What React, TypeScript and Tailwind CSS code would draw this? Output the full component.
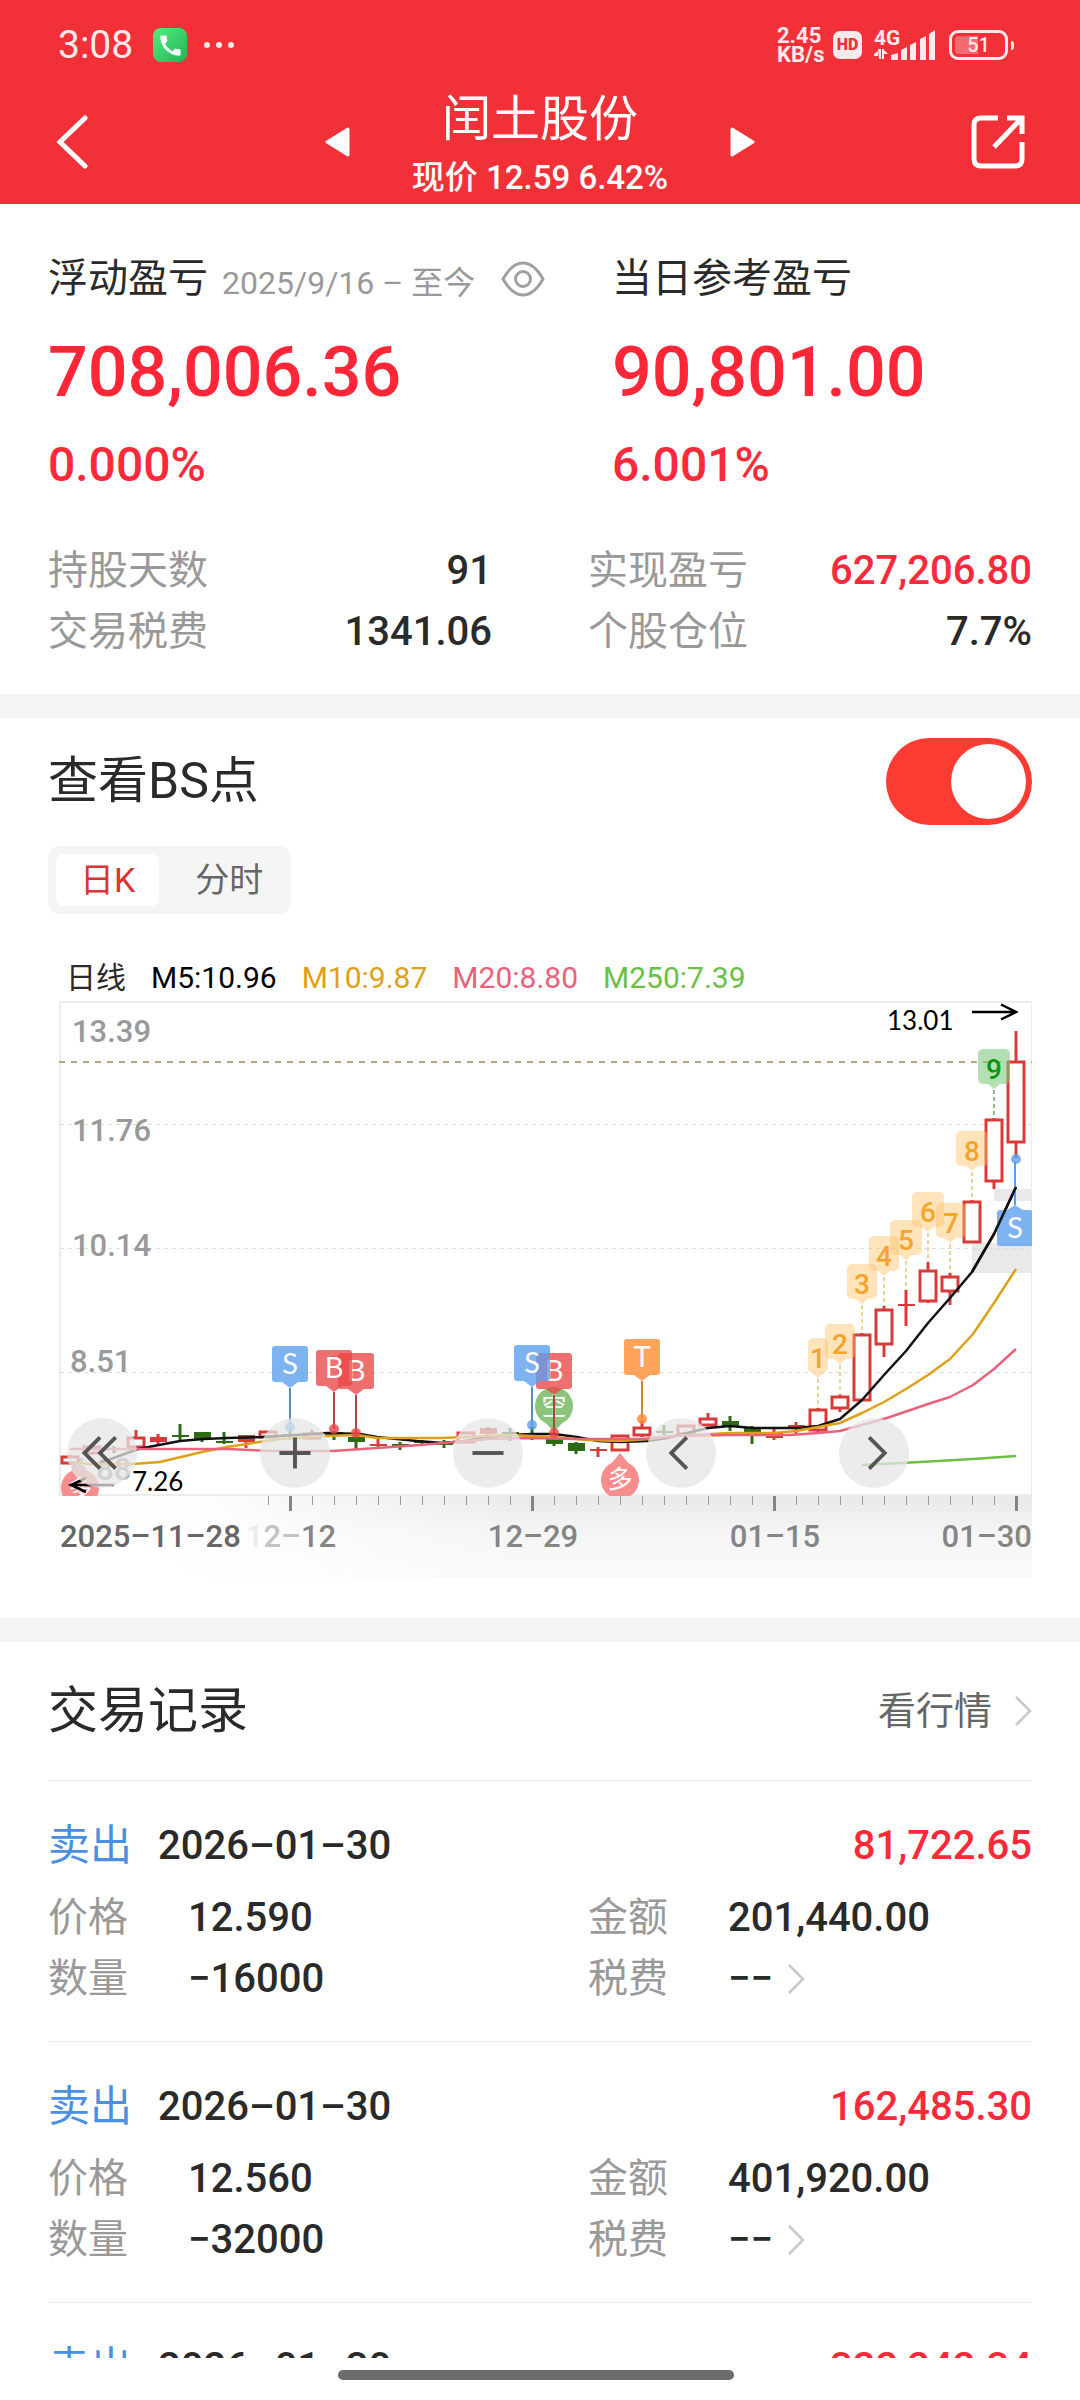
import { useState } from "react";
import { MdCall } from "react-icons/md";

type Candle = { k: "r" | "g"; top: number; bottom: number; high: number; low: number; fill?: boolean };

const X0 = 70;
const STEP = 22;

const candles: Candle[] = [
  { k: "r", top: 1457, bottom: 1463, high: 1455, low: 1465 },
  { k: "r", top: 1447, bottom: 1453, high: 1446, low: 1455 },
  { k: "g", top: 1448, bottom: 1450, high: 1446, low: 1453 },
  { k: "r", top: 1438, bottom: 1447, high: 1430, low: 1447 },
  { k: "r", top: 1437, bottom: 1442, high: 1434, low: 1444, fill: true },
  { k: "g", top: 1435, bottom: 1437, high: 1424, low: 1440 },
  { k: "g", top: 1432, bottom: 1440, high: 1432, low: 1442 },
  { k: "g", top: 1441, bottom: 1443, high: 1432, low: 1444 },
  { k: "r", top: 1435, bottom: 1442, high: 1435, low: 1448, fill: true },
  { k: "r", top: 1432, bottom: 1437, high: 1431, low: 1437 },
  { k: "g", top: 1434, bottom: 1436, high: 1428, low: 1440 },
  { k: "r", top: 1434, bottom: 1438, high: 1430, low: 1438 },
  { k: "g", top: 1432, bottom: 1435, high: 1431, low: 1440 },
  { k: "g", top: 1437, bottom: 1442, high: 1436, low: 1449 },
  { k: "r", top: 1444, bottom: 1446, high: 1438, low: 1447 },
  { k: "g", top: 1444, bottom: 1446, high: 1442, low: 1450 },
  { k: "g", top: 1441, bottom: 1443, high: 1440, low: 1444 },
  { k: "g", top: 1443, bottom: 1445, high: 1440, low: 1448 },
  { k: "r", top: 1433, bottom: 1442, high: 1432, low: 1443 },
  { k: "r", top: 1428, bottom: 1434, high: 1427, low: 1438, fill: true },
  { k: "g", top: 1432, bottom: 1434, high: 1428, low: 1441 },
  { k: "g", top: 1433, bottom: 1438, high: 1426, low: 1440 },
  { k: "g", top: 1439, bottom: 1444, high: 1438, low: 1446 },
  { k: "g", top: 1443, bottom: 1451, high: 1442, low: 1454 },
  { k: "r", top: 1449, bottom: 1451, high: 1447, low: 1457 },
  { k: "r", top: 1436, bottom: 1450, high: 1435, low: 1450 },
  { k: "r", top: 1428, bottom: 1435, high: 1420, low: 1437 },
  { k: "g", top: 1431, bottom: 1433, high: 1425, low: 1435 },
  { k: "r", top: 1426, bottom: 1434, high: 1425, low: 1434 },
  { k: "r", top: 1419, bottom: 1425, high: 1413, low: 1426 },
  { k: "g", top: 1421, bottom: 1426, high: 1416, low: 1431 },
  { k: "g", top: 1427, bottom: 1433, high: 1426, low: 1444 },
  { k: "r", top: 1433, bottom: 1438, high: 1428, low: 1440, fill: true },
  { k: "r", top: 1425, bottom: 1427, high: 1422, low: 1434 },
  { k: "r", top: 1410, bottom: 1430, high: 1408, low: 1432 },
  { k: "r", top: 1397, bottom: 1408, high: 1394, low: 1412 },
  { k: "r", top: 1335, bottom: 1400, high: 1333, low: 1401 },
  { k: "r", top: 1310, bottom: 1344, high: 1306, low: 1357 },
  { k: "r", top: 1304, bottom: 1306, high: 1290, low: 1326 },
  { k: "r", top: 1271, bottom: 1301, high: 1262, low: 1303 },
  { k: "r", top: 1277, bottom: 1291, high: 1273, low: 1305 },
  { k: "r", top: 1202, bottom: 1242, high: 1200, low: 1243 },
  { k: "r", top: 1120, bottom: 1181, high: 1118, low: 1189 },
  { k: "r", top: 1062, bottom: 1142, high: 1031, low: 1158 },
];

const M5 =
  "100,1463 138,1449 180,1441 203,1439 227,1438 263,1437 327,1433 360,1434 377,1437 417,1441 443,1443 465,1441 488,1437 510,1435 532,1434 554,1434 577,1437 598,1441 620,1442 647,1441 667,1438 687,1433 708,1428 730,1426 753,1428 797,1428 818,1426 840,1419 862,1400 884,1375 906,1351 928,1323 950,1298 972,1272 994,1234 1016,1187";
const M10 =
  "70,1462 90,1464 133,1464 160,1462 202,1452 227,1447 253,1443 280,1439 327,1436 357,1435 377,1438 440,1438 467,1437 510,1435 554,1437 587,1440 620,1441 650,1439 673,1436 730,1433 774,1433 796,1431 818,1427 840,1423 862,1413 884,1402 906,1389 928,1375 950,1359 973,1334 994,1303 1016,1269";
const M20 =
  "70,1449 227,1449 273,1451 333,1451 377,1448 420,1445 443,1443 467,1441 488,1439 530,1438 577,1439 643,1439 673,1436 730,1435 790,1435 818,1433 840,1431 862,1425 887,1418 928,1404 950,1397 973,1385 994,1369 1016,1349";
const M250 = "862,1465 920,1462 973,1459 1016,1456";

type Flag = { i: number; y: number; dot: number; t: string; bg: string; line: string };
const flags: Flag[] = [
  { i: 10, y: 1346, dot: 1427, t: "S", bg: "#5a9eee", line: "#4f8fc4" },
  { i: 13, y: 1353, dot: 1433, t: "B", bg: "#ea4648", line: "#b04444" },
  { i: 12, y: 1350, dot: 1429, t: "B", bg: "#ea4648", line: "#b04444" },
  { i: 22, y: 1353, dot: 1433, t: "B", bg: "#ea4648", line: "#b04444" },
  { i: 21, y: 1345, dot: 1425, t: "S", bg: "#5a9eee", line: "#4f8fc4" },
  { i: 26, y: 1339, dot: 1419, t: "T", bg: "#ff8a2d", line: "#cc8833" },
];

type Tag = { n: string; x: number; y: number; w: number; end: number };
const tags: Tag[] = [
  { n: "1", x: 818, y: 1338, w: 20, end: 1408 },
  { n: "2", x: 840, y: 1324, w: 30, end: 1395 },
  { n: "3", x: 862, y: 1264, w: 30, end: 1333 },
  { n: "4", x: 884, y: 1236, w: 30, end: 1306 },
  { n: "5", x: 906, y: 1220, w: 32, end: 1290 },
  { n: "6", x: 928, y: 1192, w: 32, end: 1262 },
  { n: "7", x: 951, y: 1203, w: 30, end: 1273 },
  { n: "8", x: 972, y: 1131, w: 32, end: 1200 },
  { n: "9", x: 994, y: 1049, w: 32, end: 1118 },
];

function CandleShape({ c, i }: { c: Candle; i: number }) {
  const x = X0 + i * STEP;
  const color = c.k === "r" ? "#d83a3a" : "#2f6b14";
  const solid = c.fill || c.k === "g" || c.bottom - c.top <= 2;
  return (
    <g>
      <line x1={x} x2={x} y1={c.high} y2={c.top} stroke={color} strokeWidth={3} />
      <line x1={x} x2={x} y1={c.bottom} y2={c.low} stroke={color} strokeWidth={3} />
      {solid ? (
        <rect x={x - 8} y={c.top} width={17} height={c.bottom - c.top} fill={color} />
      ) : (
        <rect x={x - 8} y={c.top} width={16} height={c.bottom - c.top} fill="#fff" stroke={color} strokeWidth={3} />
      )}
    </g>
  );
}

function Chart() {
  const ticks = Array.from({ length: 35 }, (_, n) => n + 9);
  return (
    <svg viewBox="0 0 984 580" className="block h-auto w-full" role="img" aria-label="日K线图">
      <defs>
        <linearGradient id="strip" x1="0" y1="0" x2="0" y2="1">
          <stop offset="0" stopColor="#e9e9e9" />
          <stop offset="0.45" stopColor="#f5f5f5" />
          <stop offset="1" stopColor="#fafafa" />
        </linearGradient>
        <linearGradient id="fade" x1="0" y1="0" x2="1" y2="0">
          <stop offset="0" stopColor="#fff" />
          <stop offset="0.3" stopColor="#fff" stopOpacity="0.9" />
          <stop offset="1" stopColor="#fff" stopOpacity="0" />
        </linearGradient>
        <clipPath id="plot">
          <rect x="59" y="1000" width="975" height="496" />
        </clipPath>
      </defs>
      <g transform="translate(-48 -1000)" fontFamily='Roboto, "Noto Sans CJK SC", sans-serif'>
        <rect x="972" y="1243" width="61" height="30" fill="#e9e9e9" />
        <rect x="994" y="1189" width="39" height="12" fill="#e9e9e9" />
        <g stroke="#dddddd" strokeWidth="1" strokeDasharray="4 4">
          <line x1="60" x2="1033" y1="1124.5" y2="1124.5" />
          <line x1="60" x2="1033" y1="1248.5" y2="1248.5" />
          <line x1="60" x2="1033" y1="1372.5" y2="1372.5" />
        </g>
        <rect x="60" y="1002" width="972" height="493" fill="none" stroke="#ececec" strokeWidth="2" />
        <line x1="59" x2="1033" y1="1062" y2="1062" stroke="#b5a980" strokeWidth="2" strokeDasharray="6 6" />

        <rect x="59" y="1496" width="974" height="82" fill="url(#strip)" />
        <rect x="59" y="1496" width="480" height="82" fill="url(#fade)" />

        <g fill="#999999" fontSize="31" fontWeight="500">
          <text x="72" y="1042">13.39</text>
          <text x="72" y="1141">11.76</text>
          <text x="72" y="1256">10.14</text>
          <text x="70" y="1372">8.51</text>
          <text x="70" y="1480">6.88</text>
        </g>

        <g clipPath="url(#plot)">
          <g>
            <circle cx="80" cy="1488" r="19" fill="#f78d8d" />
            <path d="M73 1472l7-8 7 8z" fill="#f78d8d" />
            <text x="80" y="1497" textAnchor="middle" fontSize="24" fill="#fff">多</text>
            <circle cx="620" cy="1480" r="19" fill="#f78d8d" />
            <path d="M611 1464l9-11 9 11z" fill="#f78d8d" />
            <text x="620" y="1488" textAnchor="middle" fontSize="25" fill="#fff">多</text>
            <circle cx="554" cy="1406" r="19" fill="#8cc47c" />
            <path d="M544 1421l10 11 10-11z" fill="#8cc47c" />
            <text x="554" y="1415" textAnchor="middle" fontSize="25" fill="#fff">空</text>
          </g>
          {candles.map((c, i) => (
            <CandleShape key={i} c={c} i={i} />
          ))}
          <g fill="none" strokeWidth="2.5" strokeLinejoin="round">
            <polyline points={M5} stroke="#111111" />
            <polyline points={M10} stroke="#dfa018" />
            <polyline points={M20} stroke="#e8637a" />
            <polyline points={M250} stroke="#6bbf45" />
          </g>
        </g>

        {tags.map((t) => {
          const green = t.n === "9";
          const c = t.n === "7" ? 950 : t.x;
          return (
            <g key={t.n}>
              <line x1={c} x2={c} y1={t.y + 41} y2={t.end} stroke={green ? "#8bbf8b" : "#ecd596"} strokeWidth="2" strokeDasharray="4 3" />
              <g fill={green ? "#7cc87c" : "#ffc169"} fillOpacity={green ? 0.58 : 0.45}>
                <rect x={t.x - t.w / 2} y={t.y} width={t.w} height="35" rx="5" />
                <path d={`M${c - 6} ${t.y + 35}l6 5 6-5z`} />
              </g>
              <text x={t.x} y={t.y + 30} textAnchor="middle" fontSize="28" fontWeight="500" fill={green ? "#0a960a" : "#f5a32a"}>
                {t.n}
              </text>
            </g>
          );
        })}

        {flags.map((f) => {
          const x = X0 + f.i * STEP;
          return (
            <g key={f.i}>
              <line x1={x} x2={x} y1={f.y + 42} y2={f.dot} stroke={f.line} strokeWidth="2" />
              <circle cx={x} cy={f.dot} r="5" fill={f.bg} fillOpacity="0.8" />
              <g fill={f.bg} fillOpacity="0.78">
                <rect x={x - 18} y={f.y} width="36" height="36" rx="3" />
                <path d={`M${x - 8} ${f.y + 36}l8 6 8-6z`} />
              </g>
              <text x={x} y={f.y + 28} textAnchor="middle" fontFamily="Lato, sans-serif" fontSize="29" fill="#fff">
                {f.t}
              </text>
            </g>
          );
        })}

        <line x1="1015" x2="1015" y1="1162" y2="1205" stroke="#5a9eee" strokeWidth="2" />
        <circle cx="1016" cy="1159" r="5" fill="#5a9eee" fillOpacity="0.8" />
        <g fill="#5a9eee" fillOpacity="0.78">
          <rect x="997" y="1210" width="36" height="36" rx="3" />
          <path d="M1007 1210l8-5 8 5z" />
        </g>
        <text x="1015" y="1238" textAnchor="middle" fontFamily="Lato, sans-serif" fontSize="29" fill="#fff">S</text>
        <polyline points="972,1272 994,1234 1016,1187" fill="none" stroke="#111111" strokeWidth="2.5" />

        <g fill="none" stroke="#000" strokeWidth="2.5">
          <path d="M972 1012h44M1001 1004.500l15 7.500-15 7.500" />
          <path d="M114 1485H71M86 1478l-15 7 15 7" />
        </g>
        <g fontFamily="Lato, sans-serif" fontSize="26" fill="#000">
          <text x="887" y="1030">13.01</text>
          <text x="132" y="1491">7.26</text>
        </g>

        {ticks.map((i) => {
          const major = (i + 1) % 11 === 0;
          return (
            <rect
              key={i}
              x={X0 + i * STEP - (major ? 1 : 0)}
              y="1496"
              width={major ? 3 : 1}
              height={major ? 15 : 9}
              fill={major ? "#858585" : "#999999"}
            />
          );
        })}
        <g fontSize="31" fontWeight="500" fill="#858585">
          <text x="60" y="1547" fill="#666666">2025–11–28</text>
          <text x="291" y="1547" textAnchor="middle">
            <tspan fill="#ececec">1</tspan>
            <tspan fill="#c4c4c4">2–</tspan>
            <tspan>12</tspan>
          </text>
          <text x="533" y="1547" textAnchor="middle">12–29</text>
          <text x="775" y="1547" textAnchor="middle">01–15</text>
          <text x="1032" y="1547" textAnchor="end">01–30</text>
        </g>
      </g>
    </svg>
  );
}

const controls = [
  { label: "最早", d: "M34 20 18 36l16 16M50 20 34 36l16 16" },
  { label: "放大", d: "M36 20v32M20 36h32" },
  { label: "缩小", d: "M20 36h32" },
  { label: "向前", d: "M42 20 26 36l16 16" },
  { label: "向后", d: "M31 20l16 16-16 16" },
];

function Chevron() {
  return (
    <svg viewBox="0 0 18 32" className="h-8 w-[18px] shrink-0" fill="none" stroke="#c8c8c8" strokeWidth="2.500" aria-hidden="true">
      <path d="M2 2l14 14L2 30" />
    </svg>
  );
}

function StatusBar() {
  return (
    <div className="flex h-[90px] items-center pl-[58px] pr-[66px] text-[#ffe9ea]">
      <span className="text-[39px] leading-none">3:08</span>
      <span className="ml-5 flex h-[34px] w-[34px] items-center justify-center rounded-lg bg-gradient-to-br from-[#53ee80] to-[#1fb455]">
        <MdCall className="h-[27px] w-[27px] text-white" />
      </span>
      <span className="ml-[17px] flex gap-[6px]">
        <i className="h-[6px] w-[6px] rounded-full bg-current" />
        <i className="h-[6px] w-[6px] rounded-full bg-current" />
        <i className="h-[6px] w-[6px] rounded-full bg-current" />
      </span>
      <span className="ml-auto w-[50px] text-[22px] leading-[19px] font-bold">
        2.45
        <br />
        KB/s
      </span>
      <span className="ml-[6px] flex h-[28px] w-[29px] items-center justify-center rounded-[7px] bg-current">
        <span className="text-[16px] leading-none font-black text-[#f23038]">HD</span>
      </span>
      <svg viewBox="0 0 62 32" className="ml-[12px] h-8 w-[62px]" fill="currentColor" aria-label="4G">
        <text x="0" y="16" fontFamily="Roboto, sans-serif" fontSize="21" fontWeight="700">4G</text>
        <path d="M4 20h3v10H5zM0 25l4-3v5H0zM8 20h2v10H8zM10 21l4 4h-4z" />
        <path d="M17 26l7-2v7h-7zM27 21l6-3v13h-6zM36 16l6-3v18h-6zM46 10l6-3v24h-6zM55 5l6-4v30h-6z" />
      </svg>
      <span className="ml-[13px] flex h-[30px] w-[59px] items-center justify-center rounded-[9px] border-[3px] border-current p-[3px]">
        <span className="flex h-full w-full items-center justify-center rounded-[4px] bg-gradient-to-r from-[#f76a70] from-50% to-transparent to-50% text-[20px] leading-none font-medium">
          51
        </span>
      </span>
      <i className="ml-[3px] h-[9px] w-[3px] rounded-r bg-current" />
    </div>
  );
}

type Trade = { date: string; profit: string; price: string; amount: string; qty: string };
const trades: Trade[] = [
  { date: "2026–01–30", profit: "81,722.65", price: "12.590", amount: "201,440.00", qty: "−16000" },
  { date: "2026–01–30", profit: "162,485.30", price: "12.560", amount: "401,920.00", qty: "−32000" },
  { date: "2026–01–30", profit: "322,242.34", price: "12.550", amount: "803,200.00", qty: "−64000" },
];

function TradeRow({ t }: { t: Trade }) {
  return (
    <li className="border-t border-[#ebebeb] pt-[34px] pb-8">
      <div className="flex h-[61px] items-center text-[40px] font-medium">
        <span className="text-[42px] font-normal text-[#4a90e2]">卖出</span>
        <span className="ml-[26px]">{t.date}</span>
        <span className="ml-auto text-[#fb2a3b]">{t.profit}</span>
      </div>
      <dl className="mt-[11px] grid grid-cols-2 gap-x-24 text-[40px]">
        <Field label="价格" value={t.price} />
        <Field label="金额" value={t.amount} />
        <Field label="数量" value={t.qty} />
        <Field label="税费" value="−−" more />
      </dl>
    </li>
  );
}

function Field({ label, value, more }: { label: string; value: string; more?: boolean }) {
  return (
    <div className="flex h-[61px] items-center">
      <dt className="w-[140px] text-[#999999]">{label}</dt>
      <dd className="flex items-center gap-[14px] font-medium">
        {value}
        {more && <Chevron />}
      </dd>
    </div>
  );
}

function Stat({ label, value, red }: { label: string; value: string; red?: boolean }) {
  return (
    <div className="flex h-[61px] items-center justify-between text-[40px]">
      <dt className="text-[#999999]">{label}</dt>
      <dd className={red ? "font-medium text-[#fb2a3b]" : "font-medium"}>{value}</dd>
    </div>
  );
}

export default function App() {
  const [bs, setBs] = useState(true);
  const [tab, setTab] = useState("日K");

  return (
    <div className='flex h-screen flex-col bg-white font-["Roboto","Noto_Sans_CJK_SC",sans-serif] text-[#2a2a2a]'>
      <header className="h-[204px] shrink-0 bg-[#f23038] text-white">
        <StatusBar />
        <div className="grid grid-cols-[1fr_auto_1fr] items-center">
          <button aria-label="返回" className="mb-2 ml-14 h-[54px] w-8 justify-self-start">
            <svg viewBox="0 0 32 54" fill="none" stroke="currentColor" strokeWidth="5" strokeLinecap="round">
              <path d="M29 3L4 27l25 24" />
            </svg>
          </button>
          <div className="flex items-center gap-[62px]">
            <button aria-label="上一只" className="mb-2 h-[30px] w-[25px]">
              <svg viewBox="0 0 25 30" fill="currentColor" stroke="currentColor" strokeWidth="3" strokeLinejoin="round">
                <path d="M2 15L23 2v26z" />
              </svg>
            </button>
            <div className="flex flex-col items-center">
              <h1 className="flex h-[58px] items-center text-[49px] leading-none">闰土股份</h1>
              <p className="mt-1 flex h-[50px] items-center text-[33px] leading-none font-medium whitespace-pre">现价 12.59 6.42%</p>
            </div>
            <button aria-label="下一只" className="mb-2 h-[30px] w-[25px]">
              <svg viewBox="0 0 25 30" fill="currentColor" stroke="currentColor" strokeWidth="3" strokeLinejoin="round">
                <path d="M23 15L2 2v26z" />
              </svg>
            </button>
          </div>
          <button aria-label="分享" className="mr-[55px] mb-2 h-[54px] w-[54px] justify-self-end">
            <svg viewBox="0 0 54 54" fill="none" stroke="currentColor" strokeWidth="5">
              <path d="M27 3H10Q3 3 3 10v34q0 7 7 7h34q7 0 7-7V27" />
              <path d="M36 3h15v16M50 4L23 32" />
            </svg>
          </button>
        </div>
      </header>

      <main className="min-h-0 flex-1 overflow-hidden">
        <section className="px-12 pt-[47px] pb-8">
          <div className="grid grid-cols-[564fr_420fr]">
            <div>
              <div className="flex h-14 items-center">
                <h2 className="text-[40px]">浮动盈亏</h2>
                <span className="ml-[14px] pt-2 text-[32px] text-[#999999]">2025/9/16 – 至今</span>
                <button aria-label="显示或隐藏金额" className="ml-[26px] h-9 w-11">
                  <svg viewBox="0 0 44 36" fill="none" stroke="#a0a0a0" strokeWidth="3">
                    <path d="M2 18Q11 2 22 2t20 16Q33 34 22 34T2 18z" />
                    <circle cx="22" cy="18" r="7.500" />
                  </svg>
                </button>
              </div>
              <p className="mt-[22px] flex h-[86px] items-center text-[70px] font-medium text-[#ff2638]">708,006.36</p>
              <p className="mt-[22px] flex h-14 items-center text-[48px] font-medium text-[#fb2a3b]">0.000%</p>
            </div>
            <div>
              <div className="flex h-14 items-center">
                <h2 className="text-[40px]">当日参考盈亏</h2>
              </div>
              <p className="mt-[22px] flex h-[86px] items-center text-[70px] font-medium text-[#ff2638]">90,801.00</p>
              <p className="mt-[22px] flex h-14 items-center text-[48px] font-medium text-[#fb2a3b]">6.001%</p>
            </div>
          </div>
          <dl className="mt-[47px] grid grid-cols-2 gap-x-24">
            <Stat label="持股天数" value="91" />
            <Stat label="实现盈亏" value="627,206.80" red />
            <Stat label="交易税费" value="1341.06" />
            <Stat label="个股仓位" value="7.7%" />
          </dl>
        </section>
        <div className="h-6 bg-[#f5f5f5]" />

        <section className="px-12 pt-5 pb-[38px]">
          <label className="flex h-[87px] items-center justify-between text-[50px]">
            查看BS点
            <input
              type="checkbox"
              role="switch"
              checked={bs}
              onChange={(e) => setBs(e.target.checked)}
              className="h-[87px] w-[146px] appearance-none rounded-full bg-[#d8d8d8] p-[6px] before:block before:h-[75px] before:w-[75px] before:rounded-full before:bg-white checked:bg-[#fc3c32] checked:before:ml-auto"
            />
          </label>
          <div className="mt-[21px] flex h-[68px] w-fit rounded-xl bg-[#f5f5f5] p-2 text-[34px] leading-none">
            {["日K", "分时"].map((n) => (
              <button
                key={n}
                onClick={() => setTab(n)}
                className={
                  n === tab
                    ? "rounded-lg bg-white px-6 text-[#dc3333]"
                    : "pr-5 pl-9 text-[#666666]"
                }
              >
                {n}
              </button>
            ))}
          </div>
          <div className="mt-[43px] flex h-10 items-center gap-[25px] pl-[18px] text-[30px]">
            <span>日线</span>
            <span className="text-black">M5:10.96</span>
            <span className="text-[#dfa018]">M10:9.87</span>
            <span className="text-[#e8637a]">M20:8.80</span>
            <span className="text-[#6bbf45]">M250:7.39</span>
          </div>
          <div className="relative mt-[3px]">
            <Chart />
            <div className="absolute inset-x-0 top-[72%] flex gap-[123px] pl-[19px]">
              {controls.map((c) => (
                <button key={c.label} aria-label={c.label} className="h-[70px] w-[70px] rounded-full bg-[#e6e6e6]/75">
                  <svg viewBox="0 0 72 72" fill="none" stroke="#555555" strokeWidth="4">
                    <path d={c.d} />
                  </svg>
                </button>
              ))}
            </div>
          </div>
        </section>
        <div className="h-6 bg-[#f5f5f5]" />

        <section className="px-12">
          <div className="flex h-[138px] items-center justify-between">
            <h2 className="text-[50px]">交易记录</h2>
            <a href="#quotes" className="flex items-center gap-[22px] text-[38px] text-[#666666]">
              看行情
              <Chevron />
            </a>
          </div>
          <ul>
            {trades.map((t, i) => (
              <TradeRow key={i} t={t} />
            ))}
          </ul>
        </section>
      </main>

      <footer className="flex h-[42px] shrink-0 justify-center bg-white pt-3 pr-2">
        <div className="h-[10px] w-[37%] rounded-full bg-[#6b6b6b]" />
      </footer>
    </div>
  );
}
